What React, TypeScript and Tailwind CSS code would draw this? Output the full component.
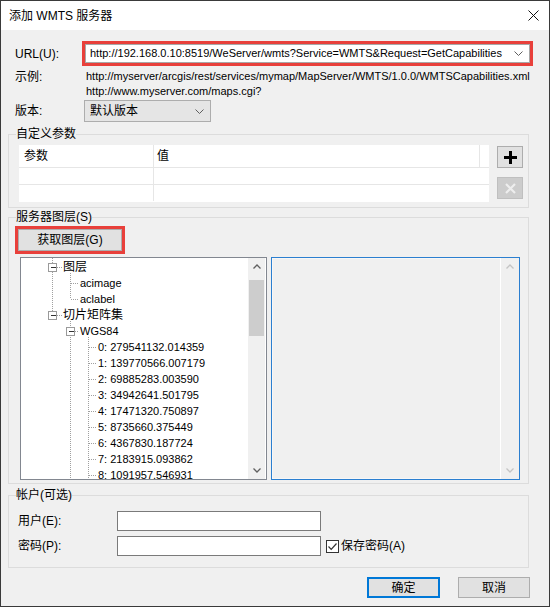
import React from "react";

const LEVELS = [
  "0: 279541132.014359",
  "1: 139770566.007179",
  "2: 69885283.003590",
  "3: 34942641.501795",
  "4: 17471320.750897",
  "5: 8735660.375449",
  "6: 4367830.187724",
  "7: 2183915.093862",
  "8: 1091957.546931",
];

const TREE_ROWS = [
  { label: "图层", indent: "pl-[42px] text-[12px]" },
  { label: "acimage", indent: "pl-[59px] text-[11px]" },
  { label: "aclabel", indent: "pl-[59px] text-[11px]" },
  { label: "切片矩阵集", indent: "pl-[42px] text-[12px]" },
  { label: "WGS84", indent: "pl-[59px] text-[11px]" },
  ...LEVELS.map((label) => ({ label, indent: "pl-[77px] text-[11px]" })),
];

function Chevron({ color = "#5f5f5f" }: { color?: string }) {
  return (
    <svg width="9" height="5" viewBox="0 0 9 5">
      <path d="M0.5 0.5 L4.5 4.5 L8.5 0.5" fill="none" stroke={color} strokeWidth="1" />
    </svg>
  );
}

function ArrowUp({ color }: { color: string }) {
  return (
    <svg width="8" height="5" viewBox="0 0 8 5">
      <path d="M0.5 4.5 L4 1 L7.5 4.5" fill="none" stroke={color} strokeWidth="1.3" />
    </svg>
  );
}

function ArrowDown({ color }: { color: string }) {
  return (
    <svg width="8" height="5" viewBox="0 0 8 5">
      <path d="M0.5 0.5 L4 4 L7.5 0.5" fill="none" stroke={color} strokeWidth="1.3" />
    </svg>
  );
}

// expander box with minus sign, centred on (cx, cy)
function Minus({ cx, cy }: { cx: number; cy: number }) {
  return (
    <g>
      <rect x={cx - 3.5} y={cy - 3.5} width="8" height="8" fill="#fff" stroke="#9a9a9a" />
      <line x1={cx - 1} y1={cy + 0.5} x2={cx + 4} y2={cy + 0.5} stroke="#333" />
    </g>
  );
}

function TreeLines() {
  const dot = { stroke: "#a0a0a0", strokeDasharray: "1 1", shapeRendering: "crispEdges" as const };
  const leafRows = [5, 6, 7, 8, 9, 10, 11, 12, 13];
  return (
    <svg className="absolute inset-0" width="227" height="221">
      <line x1="31.5" y1="0" x2="31.5" y2="57" {...dot} />
      <line x1="36" y1="9.5" x2="41" y2="9.5" {...dot} />
      <line x1="36" y1="57.5" x2="41" y2="57.5" {...dot} />
      <line x1="49.5" y1="15" x2="49.5" y2="41" {...dot} />
      <line x1="50" y1="25.5" x2="58" y2="25.5" {...dot} />
      <line x1="50" y1="41.5" x2="58" y2="41.5" {...dot} />
      <line x1="49.5" y1="63" x2="49.5" y2="221" {...dot} />
      <line x1="54" y1="73.5" x2="58" y2="73.5" {...dot} />
      <line x1="67.5" y1="79" x2="67.5" y2="221" {...dot} />
      {leafRows.map((k) => (
        <line key={k} x1="68" y1={9.5 + 16 * k} x2="76" y2={9.5 + 16 * k} {...dot} />
      ))}
      <Minus cx={31} cy={9} />
      <Minus cx={31} cy={57} />
      <Minus cx={49} cy={73} />
    </svg>
  );
}

export default function App() {
  return (
    <div className="w-[550px] h-[607px] border border-[#3a3a3a] bg-[#f0f0f0] flex flex-col text-[12px] text-black font-['Liberation_Sans','Noto_Sans_CJK_SC',sans-serif] overflow-hidden">
      {/* title bar */}
      <div className="h-[29px] bg-white flex items-center justify-between pl-[8px] pr-[10px] shrink-0">
        <span>添加 WMTS 服务器</span>
        <svg width="11" height="11" viewBox="0 0 11 11">
          <path d="M0.5 0.5 L10.5 10.5 M10.5 0.5 L0.5 10.5" stroke="#111" strokeWidth="1" />
        </svg>
      </div>

      <div className="flex flex-col">
        {/* URL */}
        <div className="mt-[11px] h-[25px] flex items-center">
          <span className="pl-[14px] w-[81px]">URL(U):</span>
          <div className="w-[451px] h-full border-[3px] border-[#e8403b]">
            <div className="h-full border border-[#a8a8a8] bg-white flex items-center justify-between pl-[4px] pr-[6px]">
              <span className="text-[11px]">http://192.168.0.10:8519/WeServer/wmts?Service=WMTS&amp;Request=GetCapabilities</span>
              <Chevron />
            </div>
          </div>
        </div>

        {/* example */}
        <div className="mt-[3px] flex leading-[15px]">
          <span className="pl-[14px] w-[85px] pt-[1px]">示例:</span>
          <div className="flex flex-col text-[11px]">
            <span>http://myserver/arcgis/rest/services/mymap/MapServer/WMTS/1.0.0/WMTSCapabilities.xml</span>
            <span>http://www.myserver.com/maps.cgi?</span>
          </div>
        </div>

        {/* version */}
        <div className="mt-[1px] h-[22px] flex items-center">
          <span className="pl-[14px] w-[83px]">版本:</span>
          <div className="w-[127px] h-full border border-[#adadad] bg-[#e5e5e5] flex items-center justify-between pl-[5px] pr-[6px]">
            <span>默认版本</span>
            <Chevron />
          </div>
        </div>

        {/* custom parameters */}
        <fieldset className="mt-[4px] ml-[7px] w-[521px] border border-[#dcdcdc] min-w-0">
          <legend className="ml-[7px] leading-[16px]">自定义参数</legend>
          <div className="flex pt-[3px] pl-[10px] pb-[5px]">
            <div className="w-[470px] h-[57px] bg-white flex flex-col">
              <div className="h-[23px] flex border-b border-[#e6e6e6]">
                <div className="w-[135px] border-r border-[#e6e6e6] pl-[5px] flex items-center">参数</div>
                <div className="w-[326px] border-r border-[#e6e6e6] pl-[3px] flex items-center">值</div>
              </div>
              <div className="h-[17px] flex border-b border-[#e6e6e6]">
                <div className="w-[135px] border-r border-[#e6e6e6]" />
              </div>
              <div className="h-[16px] flex">
                <div className="w-[135px] border-r border-[#e6e6e6]" />
              </div>
            </div>
            <div className="ml-[8px] flex flex-col">
              <div className="mt-[1px] w-[26px] h-[22px] border border-[#adadad] bg-[#e1e1e1] flex items-center justify-center">
                <svg width="13" height="13" viewBox="0 0 13 13">
                  <path d="M6.5 0 V13 M0 6.5 H13" stroke="#000" strokeWidth="3" />
                </svg>
              </div>
              <div className="mt-[9px] w-[26px] h-[22px] border border-[#bfbfbf] bg-[#cccccc] flex items-center justify-center">
                <svg width="11" height="11" viewBox="0 0 11 11">
                  <path d="M1 1 L10 10 M10 1 L1 10" stroke="#eeeeee" strokeWidth="2.2" />
                </svg>
              </div>
            </div>
          </div>
        </fieldset>

        {/* server layers */}
        <fieldset className="mt-[1px] ml-[7px] w-[521px] border border-[#dcdcdc] min-w-0">
          <legend className="ml-[7px] leading-[16px]">服务器图层(S)</legend>
          <div className="flex flex-col pb-[3px]">
            <div className="mt-[1px] ml-[6px] w-[110px] h-[28px] border-[3px] border-[#e8403b]">
              <div className="h-full border border-[#adadad] bg-[#e1e1e1] flex items-center justify-center">
                获取图层(G)
              </div>
            </div>
            <div className="mt-[3px] flex">
              <div className="ml-[11px] w-[247px] h-[223px] border border-[#828790] bg-white flex">
                <div className="relative w-[227px] h-full overflow-hidden pt-[1px]">
                  <TreeLines />
                  {TREE_ROWS.map((row) => (
                    <div key={row.label} className={`relative h-[16px] leading-[16px] whitespace-nowrap ${row.indent}`}>
                      {row.label}
                    </div>
                  ))}
                </div>
                <div className="w-[17px] h-full bg-[#f0f0f0] flex flex-col">
                  <div className="h-[17px] flex items-center justify-center">
                    <ArrowUp color="#606060" />
                  </div>
                  <div className="mt-[5px] mx-[1px] h-[56px] bg-[#cdcdcd]" />
                  <div className="flex-1" />
                  <div className="h-[17px] flex items-center justify-center">
                    <ArrowDown color="#606060" />
                  </div>
                </div>
              </div>
              <div className="ml-[4px] w-[249px] h-[223px] border border-[#2b7fd0] bg-[#f0f0f0] flex">
                <div className="flex-1 border border-[#f7f7f7] border-r-0" />
                <div className="w-[19px] h-full border-l border-white flex flex-col justify-between">
                  <div className="h-[17px] flex items-center justify-center">
                    <ArrowUp color="#c4c4c4" />
                  </div>
                  <div className="h-[17px] flex items-center justify-center">
                    <ArrowDown color="#c4c4c4" />
                  </div>
                </div>
              </div>
            </div>
          </div>
        </fieldset>

        {/* account */}
        <fieldset className="mt-[3px] ml-[7px] w-[521px] border border-[#dcdcdc] min-w-0">
          <legend className="ml-[7px] leading-[16px]">帐户(可选)</legend>
          <div className="flex flex-col pl-[9px] pb-[11px]">
            <div className="mt-[8px] h-[20px] flex items-center">
              <span className="w-[99px]">用户(E):</span>
              <div className="w-[204px] h-full border border-[#7a7a7a] bg-white" />
            </div>
            <div className="mt-[5px] h-[20px] flex items-center">
              <span className="w-[99px]">密码(P):</span>
              <div className="w-[204px] h-full border border-[#7a7a7a] bg-white" />
              <div className="ml-[5px] w-[13px] h-[13px] border border-[#333] bg-white flex items-center justify-center">
                <svg width="11" height="11" viewBox="0 0 11 11">
                  <path d="M1.5 5.5 L4.2 8.3 L9.5 2.5" fill="none" stroke="#333" strokeWidth="1.2" />
                </svg>
              </div>
              <span className="ml-[2px]">保存密码(A)</span>
            </div>
          </div>
        </fieldset>

        {/* buttons */}
        <div className="mt-[9px] h-[21px] flex justify-end pr-[19px] gap-[18px]">
          <button className="w-[73px] h-full border-2 border-[#0078d7] bg-[#e1e1e1]">确定</button>
          <button className="w-[72px] h-full border border-[#adadad] bg-[#e1e1e1]">取消</button>
        </div>
      </div>
    </div>
  );
}
